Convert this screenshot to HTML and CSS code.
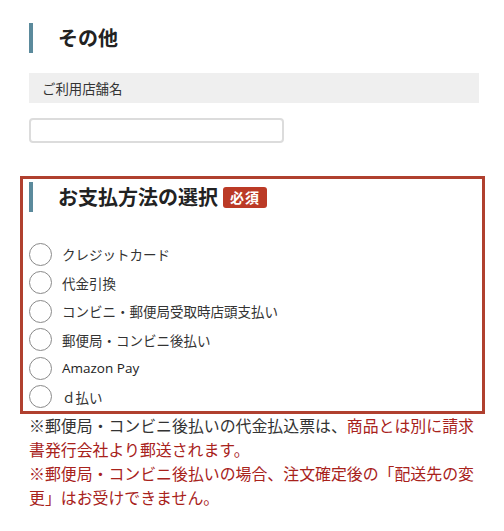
FILE: index.html
```html
<!DOCTYPE html>
<html lang="ja">
<head>
<meta charset="utf-8">
<link rel="stylesheet" href="styles.css">
</head>
<body>
<div class="page">
  <h2 class="heading heading-first">その他</h2>
  <div class="field-label">ご利用店舗名</div>
  <div class="field-input"><input type="text" class="text-input"></div>

  <div class="pay-box">
    <h2 class="heading heading-pay">お支払方法の選択<span class="badge">必須</span></h2>
    <ul class="options">
      <li class="option"><span class="radio"></span><span class="opt-label">クレジットカード</span></li>
      <li class="option"><span class="radio"></span><span class="opt-label">代金引換</span></li>
      <li class="option"><span class="radio"></span><span class="opt-label">コンビニ・郵便局受取時店頭支払い</span></li>
      <li class="option"><span class="radio"></span><span class="opt-label">郵便局・コンビニ後払い</span></li>
      <li class="option"><span class="radio"></span><span class="opt-label latin">Amazon Pay</span></li>
      <li class="option"><span class="radio"></span><span class="opt-label">ｄ払い</span></li>
    </ul>
  </div>
  <p class="note">※郵便局・コンビニ後払いの代金払込票は、<span class="red">商品とは別に請求書発行会社より郵送されます。</span></p>
  <p class="note red">※郵便局・コンビニ後払いの場合、注文確定後の「配送先の変更」はお受けできません。</p>
</div>
</body>
</html>
```

FILE: styles.css
```css
html, body {
  margin: 0;
  padding: 0;
  background: #fff;
}
body {
  font-family: "Noto Sans CJK JP", "Noto Sans", sans-serif;
  color: #333;
}
.page {
  padding: 23px 25px 0 29px;
}
.heading {
  margin: 0;
  border-left: 4px solid #5b8a9c;
  padding-left: 25px;
  height: 30px;
  line-height: 30px;
  font-size: 20px;
  font-weight: bold;
  color: #222;
  display: flex;
  align-items: center;
}
.field-label {
  margin-top: 20px;
  height: 30px;
  line-height: 30px;
  background: #efefef;
  padding-left: 13px;
  font-size: 13.4px;
  color: #333;
}
.field-input {
  margin-top: 15px;
}
.text-input {
  display: block;
  box-sizing: border-box;
  width: 255px;
  height: 25px;
  border: 2px solid #dcdcdc;
  border-radius: 4px;
  margin: 0;
  padding: 0 6px;
  background: #fff;
}
.pay-box {
  margin: 33px -6px 0 -9px;
  border: 3px solid #b0402f;
  padding: 3px 3px 0 6px;
}
.badge {
  display: inline-block;
  margin-left: 5px;
  background: #bb3a26;
  color: #fff;
  font-size: 14px;
  font-weight: bold;
  line-height: 21px;
  height: 21px;
  padding: 0 7px;
  border-radius: 3px;
  letter-spacing: 1px;
}
.options {
  list-style: none;
  margin: 28px 0 0;
  padding: 0;
}
.option {
  display: flex;
  align-items: center;
  height: 28.5px;
}
.radio {
  box-sizing: border-box;
  width: 23px;
  height: 23px;
  border: 1.5px solid #8a8a8a;
  border-radius: 50%;
  background: #fff;
  flex: none;
}
.opt-label {
  margin-left: 10px;
  font-size: 13.5px;
  color: #333;
}
.latin {
  font-family: "Open Sans", "Noto Sans", sans-serif;
  font-size: 13.5px;
  color: #222;
}
.note {
  margin: 0;
  font-size: 15.9px;
  line-height: 24px;
  color: #333;
}
.red {
  color: #a8221b;
}
```
